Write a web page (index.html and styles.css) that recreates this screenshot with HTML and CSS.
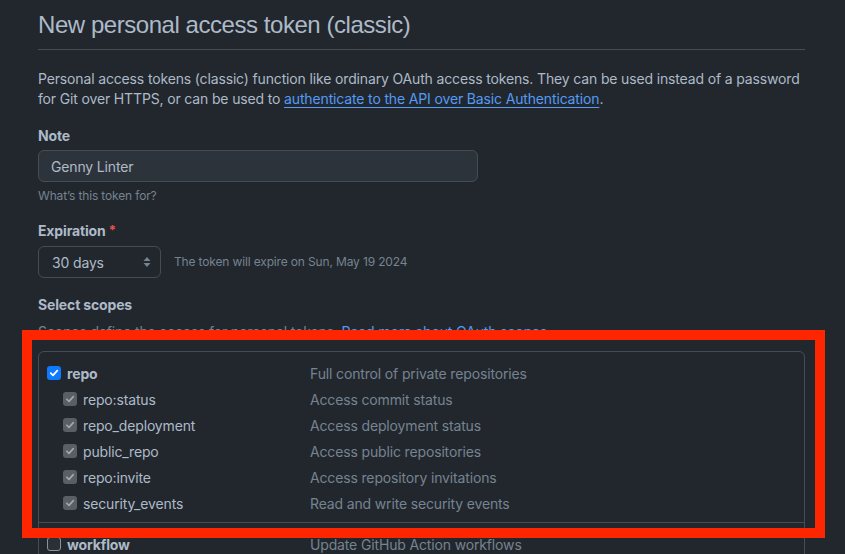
FILE: index.html
```html
<!DOCTYPE html>
<html lang="en">
<head>
<meta charset="utf-8">
<title>New personal access token (classic)</title>
<link rel="stylesheet" href="styles.css">
</head>
<body>
<div class="page">
  <h1 class="subhead">New personal access token (classic)</h1>
  <p class="intro">Personal access tokens (classic) function like ordinary OAuth access tokens. They can be used instead of a password for Git over HTTPS, or can be used to <a href="#" class="link">authenticate to the API over Basic Authentication</a>.</p>

  <div class="field field-note">
    <label class="label">Note</label>
    <div class="input">Genny Linter</div>
    <div class="hint">What’s this token for?</div>
  </div>

  <div class="field field-exp">
    <label class="label">Expiration <span class="req">*</span></label>
    <div class="exp-row">
      <div class="select">
        <span>30 days</span>
        <svg class="updown" width="8" height="12" viewBox="0 0 8 12"><path d="M4 1 L7.5 5 H0.5 Z M4 11 L0.5 7 H7.5 Z" fill="#768390"/></svg>
      </div>
      <span class="exp-note">The token will expire on Sun, May 19 2024</span>
    </div>
  </div>

  <div class="field field-scopes">
    <label class="label">Select scopes</label>
    <p class="scopes-note">Scopes define the access for personal tokens. <a href="#" class="link-plain">Read more about OAuth scopes.</a></p>
  </div>

  <div class="scopes">
    <div class="group">
      <div class="row">
        <div class="name top"><span class="cb cb-on"><svg width="10" height="10" viewBox="0 0 10 10"><path d="M1.8 5.2 L4 7.4 L8.3 2.6" fill="none" stroke="#fff" stroke-width="1.8" stroke-linecap="round" stroke-linejoin="round"/></svg></span><span class="strong">repo</span></div>
        <div class="desc">Full control of private repositories</div>
      </div>
      <div class="row">
        <div class="name sub"><span class="cb cb-dis"><svg width="10" height="10" viewBox="0 0 10 10"><path d="M1.8 5.2 L4 7.4 L8.3 2.6" fill="none" stroke="#a3a8ae" stroke-width="1.6" stroke-linecap="round" stroke-linejoin="round"/></svg></span>repo:status</div>
        <div class="desc">Access commit status</div>
      </div>
      <div class="row">
        <div class="name sub"><span class="cb cb-dis"><svg width="10" height="10" viewBox="0 0 10 10"><path d="M1.8 5.2 L4 7.4 L8.3 2.6" fill="none" stroke="#a3a8ae" stroke-width="1.6" stroke-linecap="round" stroke-linejoin="round"/></svg></span>repo_deployment</div>
        <div class="desc">Access deployment status</div>
      </div>
      <div class="row">
        <div class="name sub"><span class="cb cb-dis"><svg width="10" height="10" viewBox="0 0 10 10"><path d="M1.8 5.2 L4 7.4 L8.3 2.6" fill="none" stroke="#a3a8ae" stroke-width="1.6" stroke-linecap="round" stroke-linejoin="round"/></svg></span>public_repo</div>
        <div class="desc">Access public repositories</div>
      </div>
      <div class="row">
        <div class="name sub"><span class="cb cb-dis"><svg width="10" height="10" viewBox="0 0 10 10"><path d="M1.8 5.2 L4 7.4 L8.3 2.6" fill="none" stroke="#a3a8ae" stroke-width="1.6" stroke-linecap="round" stroke-linejoin="round"/></svg></span>repo:invite</div>
        <div class="desc">Access repository invitations</div>
      </div>
      <div class="row">
        <div class="name sub"><span class="cb cb-dis"><svg width="10" height="10" viewBox="0 0 10 10"><path d="M1.8 5.2 L4 7.4 L8.3 2.6" fill="none" stroke="#a3a8ae" stroke-width="1.6" stroke-linecap="round" stroke-linejoin="round"/></svg></span>security_events</div>
        <div class="desc">Read and write security events</div>
      </div>
    </div>
    <div class="group">
      <div class="row">
        <div class="name top"><span class="cb cb-off"></span><span class="strong">workflow</span></div>
        <div class="desc">Update GitHub Action workflows</div>
      </div>
    </div>
  </div>
</div>
<div class="annotation"></div>
</body>
</html>
```

FILE: styles.css
```css
* { box-sizing: border-box; }

html, body {
  margin: 0;
  height: 100%;
  overflow: hidden;
}

body {
  background: #22272e;
  color: #adbac7;
  font-family: Inter, "Liberation Sans", Arial, sans-serif;
  font-size: 14px;
  line-height: 1.5;
  letter-spacing: -0.15px;
}

.page {
  width: 767px;
  margin-left: 38px;
  padding-top: 10px;
}

.subhead {
  margin: 0;
  font-family: "Liberation Sans", Arial, sans-serif;
  font-size: 24px;
  font-weight: 400;
  letter-spacing: -0.45px;
  line-height: 30px;
  padding-bottom: 9px;
  border-bottom: 1px solid #444c56;
  color: #adbac7;
}

.intro {
  margin: 19px 0 0;
  line-height: 20px;
}

.link {
  color: #539bf5;
  text-decoration: underline;
  text-underline-offset: 3px;
}

.link-plain {
  color: #539bf5;
  text-decoration: none;
}

.field-note {
  margin-top: 16px;
}

.field-exp {
  margin-top: 15px;
}

.field-scopes {
  margin-top: 16px;
}

.label {
  display: block;
  font-weight: 700;
  line-height: 21px;
  color: #adbac7;
}

.req {
  color: #e5534b;
  font-size: 13px;
  vertical-align: 1px;
}

.input {
  margin-top: 4px;
  width: 440px;
  height: 32px;
  padding: 0 12px;
  display: flex;
  align-items: center;
  background: #2d333b;
  border: 1px solid #444c56;
  border-radius: 6px;
  color: #adbac7;
}

.hint {
  margin-top: 5px;
  font-size: 12px;
  line-height: 18px;
  color: #768390;
}

.exp-row {
  margin-top: 5px;
  display: flex;
  align-items: center;
  gap: 13px;
}

.select {
  width: 123px;
  height: 32px;
  padding: 0 9px 0 13px;
  display: flex;
  align-items: center;
  justify-content: space-between;
  border: 1px solid #444c56;
  border-radius: 6px;
  color: #adbac7;
}

.exp-note {
  font-size: 12px;
  color: #768390;
}

.scopes-note {
  margin: 6px 0 0;
  color: #768390;
}

.scopes {
  margin-top: 9px;
  border: 1px solid #444c56;
  border-radius: 6px;
}

.group {
  padding: 8px 8px 6px;
  border-bottom: 1px solid #444c56;
}

.row {
  display: grid;
  grid-template-columns: 263px 1fr;
  height: 26px;
  align-items: center;
}

.name {
  display: flex;
  align-items: center;
  gap: 6px;
  color: #adbac7;
}

.name.sub {
  padding-left: 16px;
}

.strong {
  font-weight: 700;
}

.desc {
  color: #768390;
}

.cb {
  width: 14px;
  height: 14px;
  border-radius: 3px;
  display: inline-flex;
  align-items: center;
  justify-content: center;
  flex: none;
}

.cb-on {
  background: #0d7aff;
}

.cb-dis {
  background: #5a5f67;
}

.cb-off {
  border: 1.5px solid #8b929a;
  background: #2b3037;
}

.annotation {
  position: absolute;
  left: 22px;
  top: 330px;
  width: 803px;
  height: 208px;
  border: 10px solid #fe2600;
  pointer-events: none;
}
```
